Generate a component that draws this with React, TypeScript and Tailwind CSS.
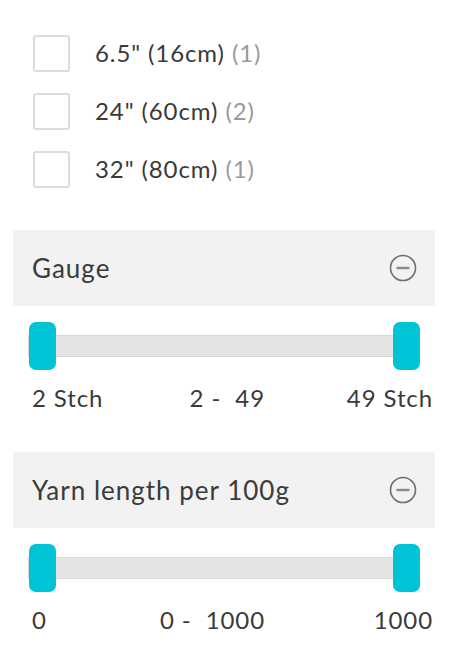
import React from "react";

const font = { fontFamily: '"Lato", "Liberation Sans", sans-serif' };

function Check({ label, count }: { label: string; count: number }) {
  return (
    <div className="flex items-center h-[36px]">
      <div className="w-[37px] h-[37px] rounded-[3px] border-2 border-[#dcdcdc] bg-white shrink-0" />
      <div className="ml-[25px] text-[24px] leading-none tracking-[0.9px] text-[#3a3a3a]">
        {label} <span className="text-[#9a9a9a]">({count})</span>
      </div>
    </div>
  );
}

function MinusCircle() {
  return (
    <svg width="28" height="28" viewBox="0 0 28 28" fill="none">
      <circle cx="14" cy="14" r="12.5" stroke="#6f6f6f" strokeWidth="1.6" />
      <line x1="7.5" y1="14" x2="20.5" y2="14" stroke="#8a8a8a" strokeWidth="2.4" />
    </svg>
  );
}

function Range({ title, left, mid, right }: { title: string; left: string; mid: string; right: string }) {
  return (
    <div>
      <div className="h-[76px] bg-[#f2f2f2] flex items-center justify-between pl-[19px] pr-[18px]">
        <span className="text-[26px] tracking-[1px] text-[#3a3a3a]">{title}</span>
        <MinusCircle />
      </div>
      <div className="px-[15px] pt-[16px]">
        <div className="relative h-[48px] flex items-center">
          <div className="w-full h-[22px] bg-[#e4e4e4] border border-[#d6d6d6]" />
          <div className="absolute left-[1px] top-0 w-[27px] h-[48px] rounded-[7px] bg-[#00c3d6]" />
          <div className="absolute right-0 top-0 w-[27px] h-[48px] rounded-[7px] bg-[#00c3d6]" />
        </div>
      </div>
      <div className="relative flex justify-between items-center h-[28px] mt-[14px] pl-[19px] pr-[2px] text-[24px] tracking-[0.9px] text-[#3a3a3a]">
        <span>{left}</span>
        <span className="absolute right-[170px] whitespace-pre">{mid}</span>
        <span>{right}</span>
      </div>
    </div>
  );
}

export default function App() {
  return (
    <div className="w-[472px] h-[660px] bg-white overflow-hidden" style={font}>
      <div className="pt-[35px] pl-[33px] flex flex-col gap-[22px]">
        <Check label={'6.5" (16cm)'} count={1} />
        <Check label={'24" (60cm)'} count={2} />
        <Check label={'32" (80cm)'} count={1} />
      </div>
      <div className="ml-[13px] w-[422px] mt-[43px]">
        <Range title="Gauge" left="2 Stch" mid="2 -  49" right="49 Stch" />
        <div className="h-[40px]" />
        <Range title="Yarn length per 100g" left="0" mid="0 -  1000" right="1000" />
      </div>
    </div>
  );
}
